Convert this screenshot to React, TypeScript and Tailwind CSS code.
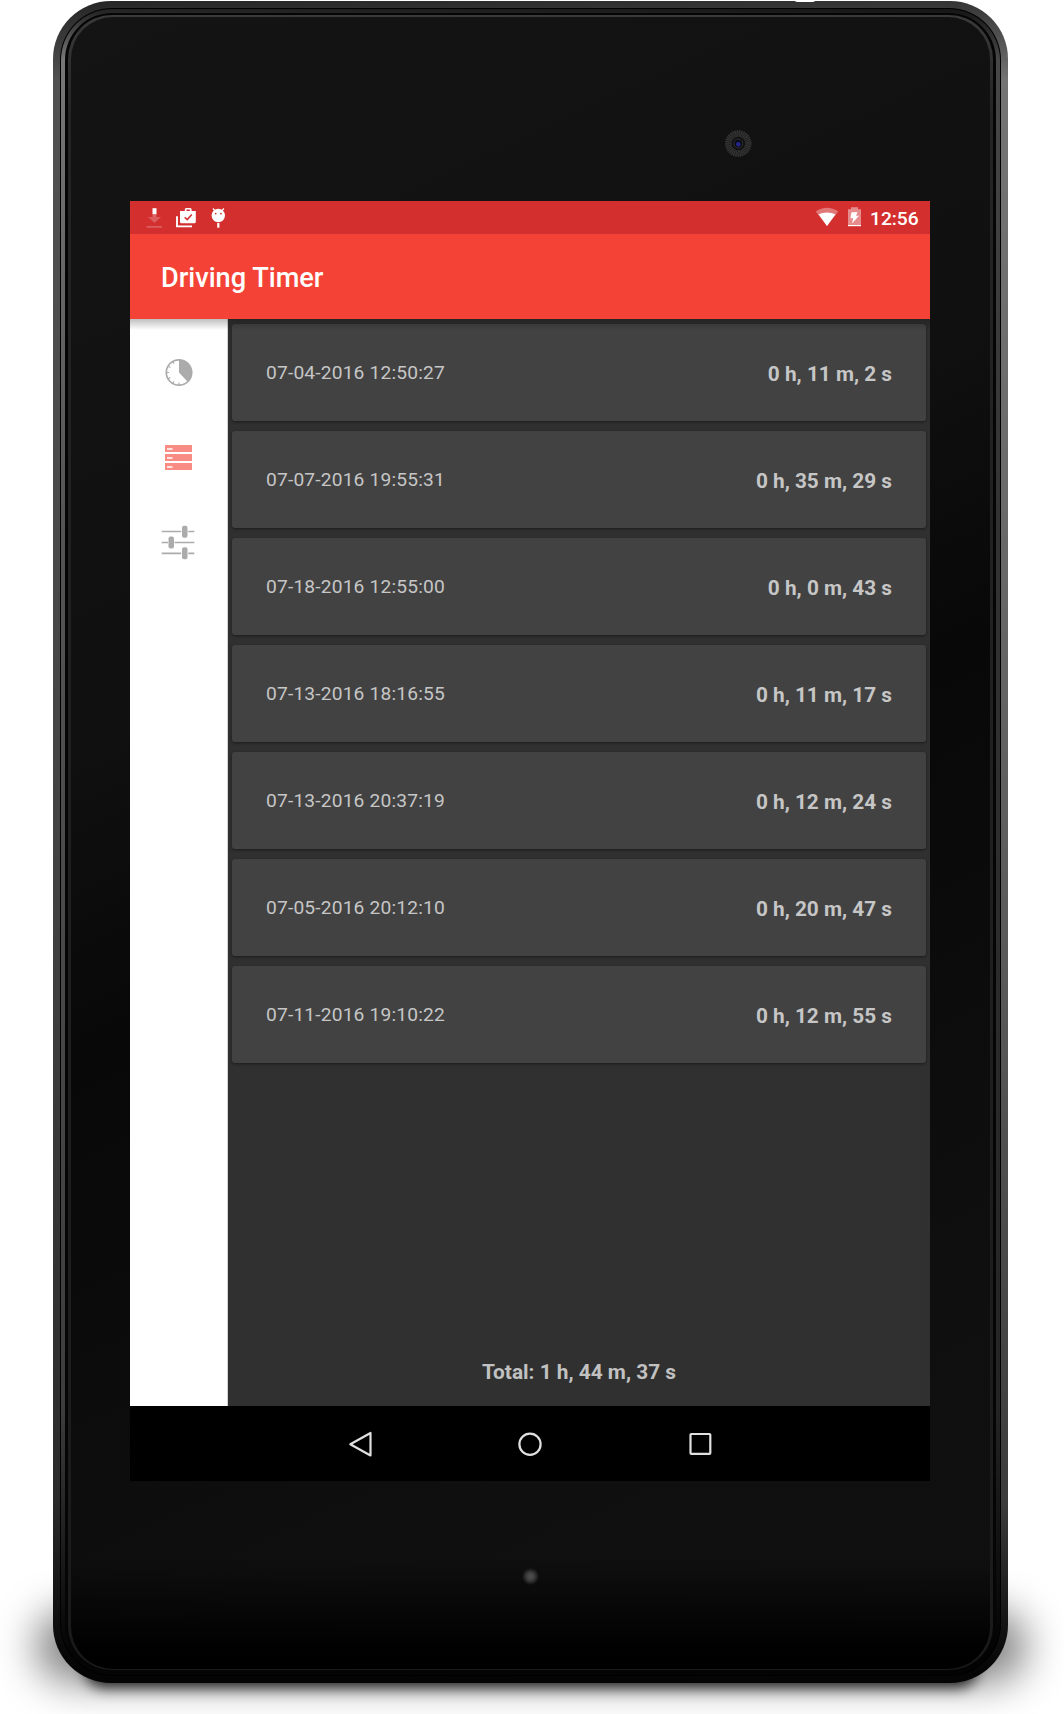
const trips: [string, string][] = [
  ["07-04-2016 12:50:27", "0 h, 11 m, 2 s"],
  ["07-07-2016 19:55:31", "0 h, 35 m, 29 s"],
  ["07-18-2016 12:55:00", "0 h, 0 m, 43 s"],
  ["07-13-2016 18:16:55", "0 h, 11 m, 17 s"],
  ["07-13-2016 20:37:19", "0 h, 12 m, 24 s"],
  ["07-05-2016 20:12:10", "0 h, 20 m, 47 s"],
  ["07-11-2016 19:10:22", "0 h, 12 m, 55 s"],
];

function StatusBar() {
  return (
    <div className="flex h-[33px] items-start bg-[#d32f2f] text-white">
      <svg width="100" height="33" viewBox="0 0 100 33" fill="#fff">
        <g opacity=".22">
          <path d="M18 16h13l-6.500 6z" />
          <path d="M16.500 25h15.500v1.700H16.500z" />
        </g>
        <path d="M22.500 7.200h4v6h-4z" />
        <path d="M22.500 13.200h4V16h-4z" opacity=".25" />
        <path d="M47 15.200v10.200h15" fill="none" stroke="#fff" strokeWidth="1.900" />
        <path
          fillRule="evenodd"
          d="M51.500 10h3.300V8.500Q54.800 7 56.300 7h3.800q1.500 0 1.500 1.500V10h4.200v10.800q0 1.500-1.500 1.500H51.500q-1.500 0-1.500-1.500V10zm5 0h3.400V8.600h-3.400z"
        />
        <path d="m54.700 16.200 2.500 2.400 4.600-5" fill="none" stroke="#d32f2f" strokeWidth="1.500" />
        <circle cx="88.300" cy="14.500" r="6.700" />
        <path d="m83 7.500 2.500 3M93.800 7.500l-2.500 3" stroke="#fff" strokeWidth="1.200" />
        <circle cx="85.700" cy="12.600" r=".9" fill="#d32f2f" />
        <circle cx="91" cy="12.600" r=".9" fill="#d32f2f" />
        <path d="M87.200 22h2.200v4.700h-2.200z" />
      </svg>
      <svg className="ml-auto" width="47" height="33" viewBox="0 0 47 33" fill="#fff">
        <path d="M.7 10.500Q12 3 23.200 10.500L12 25z" opacity=".35" />
        <path d="M3.500 13.300Q12 9.500 20.500 13.300L12 25z" />
        <path d="M33 8.200h3V6.200h7v2H46V25H33z" opacity=".45" />
        <path d="M33 24h13v1.200H33z" />
        <path d="M36.500 11.200h6l-1.500 3.600h3l-7 7.700 1.300-5.300h-2.800z" />
      </svg>
      <div className="mr-[11px] ml-[8px] w-[49px] text-[19.200px] leading-[35px] font-medium whitespace-nowrap">12:56</div>
    </div>
  );
}

function Sidebar() {
  return (
    <nav className="flex w-[98px] shrink-0 flex-col items-center border-r border-[#d2d2d2] bg-white pt-[39px]">
      <svg width="28" height="29" viewBox="0 0 28 28">
        <circle cx="14" cy="14" r="12.700" fill="none" stroke="#ababab" strokeWidth="1.700" />
        <path d="M14 14V1.300A12.700 12.700 0 0 1 22.600 23.300z" fill="#ababab" />
        <path d="M14 24v3M4 14H1.300M9 5.300 7.800 3.200M5.300 9 3.200 7.800M5.300 19l-2.100 1.200M9 22.700l-1.200 2.100" stroke="#ababab" strokeWidth="1.100" />
      </svg>
      <svg className="mt-[58px]" width="27" height="25" viewBox="0 0 27 25">
        {[0, 9, 18].map((y) => (
          <g key={y}>
            <rect y={y} width="27" height="7" fill="#f98c84" />
            <rect x="2" y={y + 3} width="5.500" height="2" fill="#ffe3e1" />
          </g>
        ))}
      </svg>
      <svg className="mt-[55px] mr-px" width="34" height="35" viewBox="0 0 34 35" fill="#ababab">
        <path d="M.7 6.500h19.500M27.300 6.500h6M.7 17.500H7M13.500 17.500h19.800M.7 28.300h19.500M27.300 28.300h6" stroke="#ababab" strokeWidth="1.700" />
        <rect x="21" y=".7" width="5.500" height="12" rx="2" />
        <rect x="7.500" y="11.500" width="5.500" height="12" rx="2" />
        <rect x="21" y="22.200" width="5.500" height="12" rx="2" />
      </svg>
    </nav>
  );
}

function NavBar() {
  return (
    <div className="flex h-[75px] items-center justify-center bg-black">
      <svg width="400" height="75" viewBox="0 0 400 75" fill="none" stroke="#e0e0e0" strokeWidth="2.200">
        <path d="M40.500 27v22.500L20.300 38.200z" strokeLinejoin="round" />
        <circle cx="200" cy="38.300" r="10.600" />
        <rect x="360.500" y="28" width="19.800" height="19.800" rx=".8" />
      </svg>
    </div>
  );
}

function Screen() {
  return (
    <main className="mt-[183px] ml-[59px] flex h-[1280px] w-[800px] flex-col bg-[#303030] font-[Roboto,sans-serif]">
      <StatusBar />
      <header className="flex h-[85px] items-center bg-[#f44336] pl-[31px] text-[27.150px] font-medium text-white">
        <h1 className="pt-[3px]">Driving Timer</h1>
      </header>
      <div className="relative flex h-[1087px]">
        <Sidebar />
        <section className="flex grow flex-col px-1 pt-[5px]">
          <div className="flex flex-col gap-[10px]">
            {trips.map(([date, duration]) => (
              <div
                key={date}
                className="flex h-[97px] items-center justify-between rounded-[3px] bg-[#424242] pr-[34px] pl-[34px] text-[#c6c6c6] shadow-[0_1px_3px_rgba(0,0,0,0.45)]"
              >
                <span className="pt-[2px] text-[19.200px] tracking-[0.170px]">{date}</span>
                <span className="pt-[4px] text-[20.800px] font-bold">{duration}</span>
              </div>
            ))}
          </div>
          <p className="mt-auto pb-[18px] text-center text-[20.850px] font-bold text-[#c1c1c1]">Total: 1 h, 44 m, 37 s</p>
        </section>
        <div className="absolute inset-x-0 top-0 h-[11px] bg-linear-to-b from-black/25 to-transparent" />
      </div>
      <NavBar />
    </main>
  );
}

export default function App() {
  return (
    <div className="relative h-[1714px] w-[1064px] overflow-hidden bg-white pt-px pl-[53px]">
      <div className="absolute top-[1610px] left-[36px] h-[72px] w-[990px] rounded-[50px] bg-black/50 blur-[20px]" />
      <div className="absolute top-[1650px] left-[85px] h-[38px] w-[892px] rounded-[30px] bg-black/80 blur-[7px]" />
      <div className="relative h-[1682px] w-[955px] rounded-[58px] bg-[linear-gradient(90deg,rgba(0,0,0,0.3),transparent),linear-gradient(180deg,#353535_0,#747474_80px,#6a6a6a_500px,#585858_1000px,#3c3c3c_1500px,#050505_1670px)] p-[7px]">
        <div className="h-full rounded-[52px] bg-black p-px">
          <div className="h-full rounded-[51px] bg-[linear-gradient(90deg,transparent,rgba(0,0,0,0.4)),linear-gradient(180deg,#222_0,#777_50px,#555_500px,#3d3d3d_1400px,#050505_1640px)] p-[4px]">
            <div className="h-full rounded-[47px] bg-[#050505] px-[3px] pt-[2px] pb-px">
              <div className="h-full rounded-[44px] bg-[linear-gradient(180deg,#3a3a3a,#242424_100px,#1c1c1c_1500px,#1a1a1a)] px-[3px] pt-[2px] pb-px">
                <div className="h-full rounded-[42px] bg-[linear-gradient(180deg,transparent_1540px,#000_1635px),linear-gradient(155deg,#141414_0%,#101010_35%,#080808_50%,#0f0f0f_80%,#101010_100%)] pt-px">
                  <Screen />
                </div>
              </div>
            </div>
          </div>
        </div>
      </div>
      <div className="absolute top-[-5px] left-[794px] h-[7px] w-[22px] rounded-full bg-white" />
      <svg className="absolute top-[128px] left-[723px]" width="30" height="30" viewBox="0 0 30 30">
        <circle cx="15.300" cy="15.500" r="10" fill="none" stroke="#424242" strokeWidth="6.500" strokeDasharray="1 .9" />
        <circle cx="15.300" cy="15.500" r="10" fill="none" stroke="#2c2c2c" strokeWidth="6" opacity=".55" />
        <circle cx="15.300" cy="15.500" r="4.400" fill="#0b0b18" stroke="#303030" />
        <circle cx="15.300" cy="16.300" r="2.300" fill="#26268a" />
      </svg>
      <div className="absolute top-[1568px] left-[522px] h-[17px] w-[17px] rounded-full bg-[radial-gradient(circle,#505050_0%,#404040_30%,transparent_72%)]" />
    </div>
  );
}
